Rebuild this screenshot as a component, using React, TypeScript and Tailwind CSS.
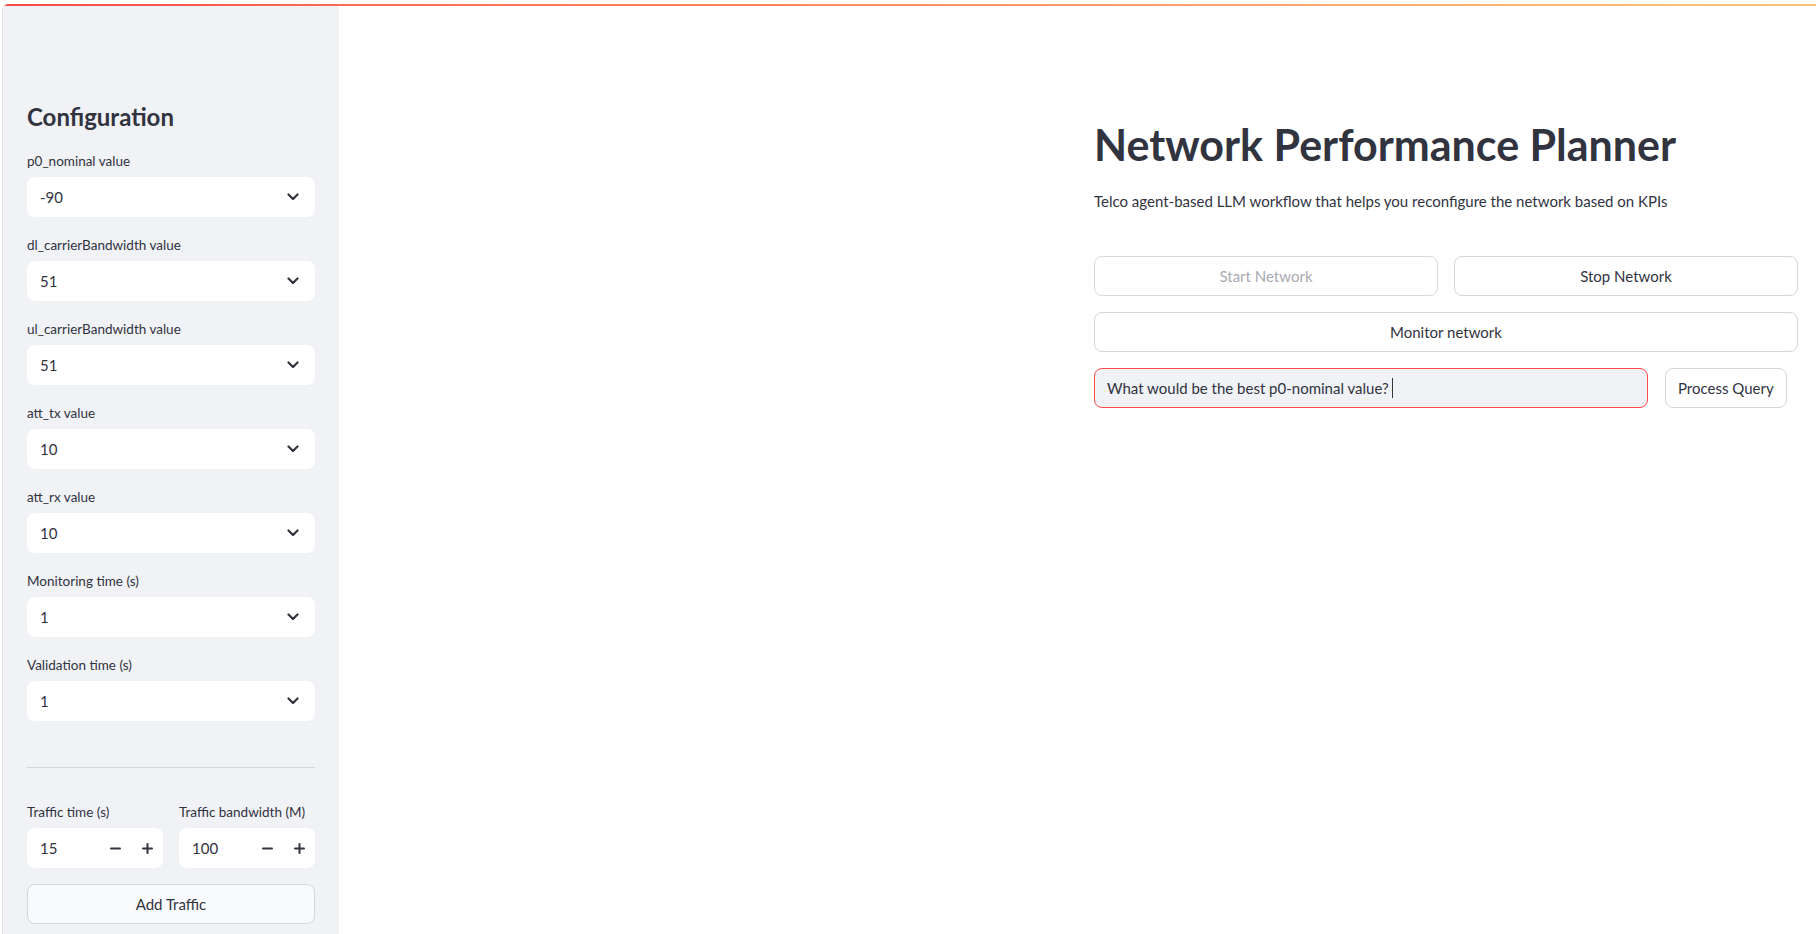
import { useState } from 'react';

const SELECTS = [
  { label: 'p0_nominal value', value: '-90' },
  { label: 'dl_carrierBandwidth value', value: '51' },
  { label: 'ul_carrierBandwidth value', value: '51' },
  { label: 'att_tx value', value: '10' },
  { label: 'att_rx value', value: '10' },
  { label: 'Monitoring time (s)', value: '1' },
  { label: 'Validation time (s)', value: '1' },
];

const font = { fontFamily: 'Lato, "Noto Sans", sans-serif' };

function Chevron() {
  return (
    <svg width="12" height="8" viewBox="0 0 12 8" fill="none">
      <path d="M1.5 1.5 L6 6 L10.5 1.5" stroke="#31333f" strokeWidth="2.2" strokeLinecap="round" strokeLinejoin="round" />
    </svg>
  );
}

function Minus() {
  return (
    <svg width="11" height="11" viewBox="0 0 11 11">
      <path d="M1 5.5 H10" stroke="#31333f" strokeWidth="2" strokeLinecap="round" />
    </svg>
  );
}

function Plus() {
  return (
    <svg width="11" height="11" viewBox="0 0 11 11">
      <path d="M1 5.5 H10 M5.5 1 V10" stroke="#31333f" strokeWidth="2" strokeLinecap="round" />
    </svg>
  );
}

function Label({ children }: { children: React.ReactNode }) {
  return <div className="h-[24px] flex items-center text-[13.5px] text-[#31333f] mb-[4px]">{children}</div>;
}

function SelectBox({ label, value }: { label: string; value: string }) {
  return (
    <div className="mb-[16px]">
      <Label>{label}</Label>
      <div className="h-[40px] bg-white rounded-lg flex items-center justify-between pl-[13px] pr-[16px] text-[15px] text-[#31333f]">
        <span>{value}</span>
        <Chevron />
      </div>
    </div>
  );
}

function NumberInput({ label, initial }: { label: string; initial: number }) {
  const [val, setVal] = useState(initial);
  return (
    <div className="flex-1">
      <Label>{label}</Label>
      <div className="h-[40px] bg-white rounded-lg flex items-center text-[15px] text-[#31333f]">
        <span className="flex-1 pl-[13px]">{val}</span>
        <button type="button" onClick={() => setVal(val - 1)} className="w-[32px] h-full flex items-center justify-center">
          <Minus />
        </button>
        <button type="button" onClick={() => setVal(val + 1)} className="w-[32px] h-full flex items-center justify-center">
          <Plus />
        </button>
      </div>
    </div>
  );
}

export default function App() {
  return (
    <div className="h-screen bg-white pt-[4px] pl-[2px]" style={font}>
      <div className="h-full flex flex-col rounded-tl-[6px] border-l border-[#dcdde2] overflow-hidden">
        <div className="h-[2px] bg-gradient-to-r from-[#ff4b4b] to-[#f8c578] shrink-0" />
        <div className="flex flex-1 min-h-0">
          <aside className="w-[336px] shrink-0 bg-[#f0f2f6] px-6 pt-[96px]">
            <h2 className="text-[24px] font-bold text-[#31333f] leading-[30px] mb-[17px]">Configuration</h2>
            {SELECTS.map((s) => (
              <SelectBox key={s.label} label={s.label} value={s.value} />
            ))}
            <hr className="mt-[46px] mb-[32px] border-0 border-t border-[#d3d5db]" />
            <div className="flex gap-4 mb-[16px]">
              <NumberInput label="Traffic time (s)" initial={15} />
              <NumberInput label="Traffic bandwidth (M)" initial={100} />
            </div>
            <button type="button" className="w-full h-[40px] rounded-lg border border-[#d5d6da] bg-[#f9fafb] text-[15px] text-[#31333f]">
              Add Traffic
            </button>
          </aside>

          <main className="flex-1 flex justify-end pr-[18px] pt-[113px]">
            <div className="w-[704px]">
              <h1 className="text-[43px] font-bold text-[#31333f] leading-[52px]">Network Performance Planner</h1>
              <p className="mt-[18px] text-[15px] text-[#31333f] leading-[24px]">
                Telco agent-based LLM workflow that helps you reconfigure the network based on KPIs
              </p>
              <div className="mt-[43px] grid grid-cols-2 gap-4">
                <button type="button" disabled className="h-[40px] rounded-lg border border-[#d9d9dc] bg-white text-[15px] text-[#a9aab2]">
                  Start Network
                </button>
                <button type="button" className="h-[40px] rounded-lg border border-[#d5d6da] bg-white text-[15px] text-[#31333f]">
                  Stop Network
                </button>
              </div>
              <button type="button" className="mt-[16px] w-full h-[40px] rounded-lg border border-[#d5d6da] bg-white text-[15px] text-[#31333f]">
                Monitor network
              </button>
              <div className="mt-[16px] flex items-center">
                <div className="w-[554px] h-[40px] rounded-lg border border-[#ff4b4b] bg-[#f0f2f6] flex items-center pl-[12px] text-[15px] text-[#31333f]">
                  <span>What would be the best p0-nominal value?</span>
                  <span className="inline-block w-px h-[20px] bg-[#31333f] ml-[3px]" />
                </div>
                <button type="button" className="ml-[17px] h-[40px] px-[12px] rounded-lg border border-[#d5d6da] bg-white text-[15px] text-[#31333f]">
                  Process Query
                </button>
              </div>
            </div>
          </main>
        </div>
      </div>
    </div>
  );
}
